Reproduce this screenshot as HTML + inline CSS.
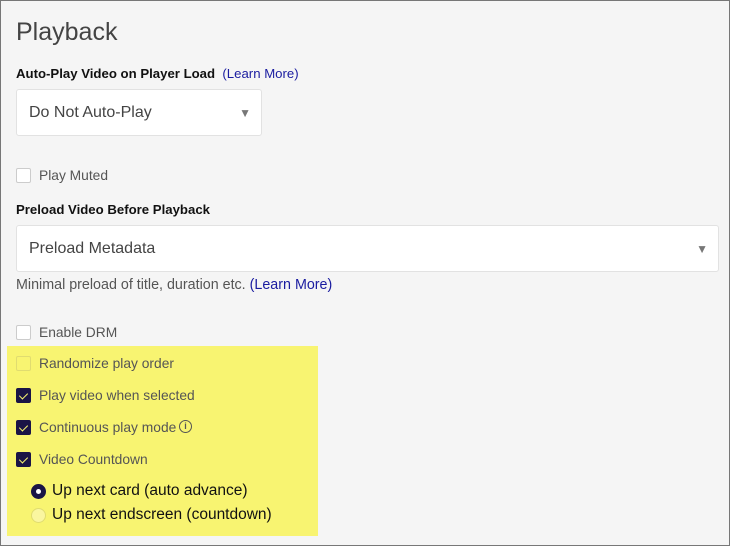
<!DOCTYPE html>
<html><head><style>
*{box-sizing:border-box;margin:0;padding:0}
body{width:730px;height:546px;background:#f5f5f5;font-family:"Liberation Sans",sans-serif;color:#555;position:relative;overflow:hidden;box-shadow:inset 0 0 0 1px #777;}
.a{position:absolute}
h1{position:absolute;left:16px;top:18px;font-size:25px;font-weight:normal;color:#444}
.lbl{font-size:13.2px;font-weight:bold;color:#111}
.link{color:#1a1ca0;font-weight:normal}
.sel{background:#fff;border:1px solid #e2e2e2;border-radius:3px;font-size:16px;color:#444;padding-left:12px;display:flex;align-items:center}
.arr{position:absolute;right:10px;top:50%;transform:translateY(-50%);font-size:12px;color:#777}
.cb{position:absolute;width:15px;height:15px;border:1px solid #ccc;border-radius:2px;background:#fff}
.cb.on{background:#1a1446;border-color:#1a1446}
.cb.on:after{content:"";position:absolute;left:4px;top:2px;width:4px;height:7px;border:solid #f8f471;border-width:0 1.5px 1.5px 0;transform:rotate(45deg)}
.t{position:absolute;font-size:13.8px;color:#555}
.yel{position:absolute;left:7px;top:346px;width:311px;height:190px;background:#f8f471}
.rd{position:absolute;width:15px;height:15px;border-radius:50%}
</style></head><body>
<h1>Playback</h1>
<div class="a lbl" style="left:16px;top:66px">Auto-Play Video on Player Load &nbsp;<span class="link">(Learn More)</span></div>
<div class="a sel" style="left:16px;top:89px;width:246px;height:47px">Do Not Auto-Play<span class="arr">▼</span></div>
<div class="cb" style="left:16px;top:168px"></div><div class="t" style="left:39px;top:168px">Play Muted</div>
<div class="a lbl" style="left:16px;top:202px">Preload Video Before Playback</div>
<div class="a sel" style="left:16px;top:225px;width:703px;height:47px">Preload Metadata<span class="arr">▼</span></div>
<div class="t" style="left:16px;top:277px;font-size:14.3px">Minimal preload of title, duration etc. <span class="link">(Learn More)</span></div>
<div class="cb" style="left:16px;top:325px"></div><div class="t" style="left:39px;top:325px">Enable DRM</div>
<div class="yel"></div>
<div class="cb" style="left:16px;top:356px;background:#f8f471;border-color:#e0dc70"></div><div class="t" style="left:39px;top:356px">Randomize play order</div>
<div class="cb on" style="left:16px;top:388px"></div><div class="t" style="left:39px;top:388px">Play video when selected</div>
<div class="cb on" style="left:16px;top:420px"></div><div class="t" style="left:39px;top:420px">Continuous play mode</div>
<div class="a" style="left:179px;top:420px;width:13px;height:13px;border:1.3px solid #555;border-radius:50%;font-size:9px;text-align:center;line-height:11px;color:#555;font-weight:bold">i</div>
<div class="cb on" style="left:16px;top:452px"></div><div class="t" style="left:39px;top:452px">Video Countdown</div>
<div class="rd" style="left:31px;top:484px;background:#1a1446"></div><div class="a" style="left:36px;top:489px;width:5px;height:5px;border-radius:50%;background:#fff"></div>
<div class="t" style="left:52px;top:482px;font-size:15.5px;color:#111">Up next card (auto advance)</div>
<div class="rd" style="left:31px;top:508px;border:1px solid #e0dc70;background:#faf6a0"></div>
<div class="t" style="left:52px;top:506px;font-size:15.5px;color:#111">Up next endscreen (countdown)</div>
</body></html>
